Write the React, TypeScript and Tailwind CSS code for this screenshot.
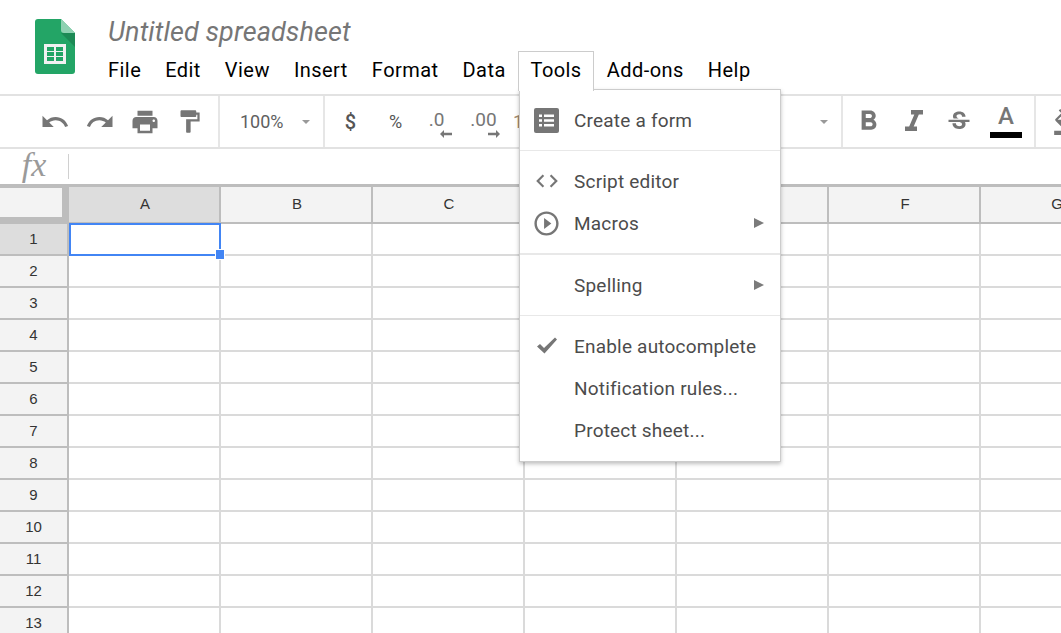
import React from 'react';
import {
  MdUndo, MdRedo, MdPrint, MdFormatPaint, MdFormatBold, MdFormatItalic, MdStrikethroughS,
  MdCode, MdPlayCircleOutline, MdFormatColorFill,
} from 'react-icons/md';

const menuBar = ['File', 'Edit', 'View', 'Insert', 'Format', 'Data'];
const columns = ['A', 'B', 'C', 'D', 'E', 'F', 'G'];
const rows = [1, 2, 3, 4, 5, 6, 7, 8, 9, 10, 11, 12, 13];

const Logo = () => (
  <svg width="40" height="55" viewBox="0 0 40 55">
    <path d="M3 0H26L40 14V52a3 3 0 0 1-3 3H3a3 3 0 0 1-3-3V3a3 3 0 0 1 3-3z" fill="#23a566" />
    <path d="M26 14L40 28V14z" fill="#1c8a55" />
    <path d="M26 0L40 14H29a3 3 0 0 1-3-3z" fill="#8ed1b1" />
    <path d="M9 25H31V45H9z" fill="#f1f1f1" />
    <path d="M12 28H19V32H12zM21 28H28V32H21zM12 33H19V37H12zM21 33H28V37H21zM12 38H19V42H12zM21 38H28V42H21z" fill="#23a566" />
  </svg>
);

const Separator = () => <div className="w-[2px] h-full shrink-0 bg-[#e6e6e6]" />;

const ToolButton = ({ children }: { children: React.ReactNode }) => (
  <div className="w-[45px] h-full flex items-center justify-center text-[#767676] shrink-0">{children}</div>
);

const DecimalIcon = ({ label, flip }: { label: string; flip?: boolean }) => (
  <div className="relative text-[19px] leading-none text-[#767676] -mt-[5px]">
    {label}
    <svg
      width="12"
      height="8"
      viewBox="0 0 12 8"
      className={`absolute -bottom-[9px] ${flip ? 'right-[-8px] -scale-x-100' : 'right-[-3px]'}`}
    >
      <path d="M0 2.8H8V0L12 4L8 8V5.2H0z" fill="#767676" />
    </svg>
  </div>
);

const Caret = () => (
  <div className="w-0 h-0 border-x-[4px] border-x-transparent border-t-[4px] border-t-[#999999]" />
);

const Toolbar = () => (
  <div className="h-[55px] border-y-2 border-[#e2e2e2] flex items-stretch pl-[32px] overflow-hidden">
    <ToolButton><MdUndo size={30} /></ToolButton>
    <ToolButton><MdRedo size={30} /></ToolButton>
    <ToolButton><MdPrint size={30} /></ToolButton>
    <ToolButton><MdFormatPaint size={27} /></ToolButton>
    <div className="ml-[6px] shrink-0"><Separator /></div>
    <div className="w-[103px] flex items-center pl-[20px] text-[18px] text-[#5f5f5f] shrink-0">
      <span className="w-[62px]">100%</span>
      <Caret />
    </div>
    <Separator />
    <div className="w-[3px] shrink-0" />
    <ToolButton><span className="text-[20px] font-medium text-[#555555]">$</span></ToolButton>
    <ToolButton><span className="text-[18px] text-[#555555]">%</span></ToolButton>
    <div className="w-[37px] flex items-center justify-center shrink-0"><DecimalIcon label=".0" flip /></div>
    <div className="w-[57px] flex items-center justify-center shrink-0"><DecimalIcon label=".00" /></div>
    <div className="w-[329px] flex items-center justify-between pr-[13px] shrink-0">
      <span className="text-[18px] text-[#a08a70] ml-[1px]">123</span>
      <Caret />
    </div>
    <Separator />
    <div className="w-[3px] shrink-0" />
    <ToolButton><MdFormatBold size={33} /></ToolButton>
    <ToolButton><MdFormatItalic size={36} /></ToolButton>
    <ToolButton><MdStrikethroughS size={28} /></ToolButton>
    <div className="w-[50px] flex flex-col items-center shrink-0 pt-[8px]">
      <span className="text-[24px] leading-[24px] font-medium text-[#767676]">A</span>
      <div className="w-[32px] h-[6px] bg-black mt-[4px]" />
    </div>
    <div className="ml-[3px] mr-[16px] shrink-0"><Separator /></div>
    <div className="flex items-center text-[#767676] shrink-0"><MdFormatColorFill size={26} /></div>
  </div>
);

const FormulaBar = () => (
  <div className="h-[35px] flex items-center">
    <div className="w-[68px] h-full flex items-center justify-center pb-[3px] text-[34px] leading-none italic text-[#9a9a9a] font-['Liberation_Serif',serif]">
      fx
    </div>
    <div className="w-px h-[25px] bg-[#d0d0d0]" />
  </div>
);

const Grid = () => (
  <div className="border-t-[3px] border-[#bdbdbd]">
    <div className="flex h-[37px]">
      <div className="w-[69px] shrink-0 h-full bg-[#bdbdbd]">
        <div className="w-[62px] h-[29px] mt-px bg-[#f3f3f3]" />
      </div>
      {columns.map((col, i) => (
        <div
          key={col}
          className={`w-[152px] shrink-0 h-full flex items-center justify-center pl-[2px] border-r-2 border-b-2 border-[#bdbdbd] text-[15px] text-[#333333] font-['Liberation_Sans',sans-serif] ${i === 0 ? 'bg-[#dddddd]' : 'bg-[#f3f3f3]'}`}
        >
          {col}
        </div>
      ))}
    </div>
    {rows.map((row) => (
      <div key={row} className="flex h-[32px]">
        <div
          className={`w-[69px] shrink-0 h-full flex items-center justify-center border-r-2 border-b-2 border-[#bdbdbd] text-[15px] text-[#333333] font-['Liberation_Sans',sans-serif] ${row === 1 ? 'bg-[#dddddd]' : 'bg-[#f3f3f3]'}`}
        >
          {row}
        </div>
        {columns.map((col) => (
          <div key={col} className="w-[152px] shrink-0 h-full border-r-2 border-b-2 border-[#dadada]" />
        ))}
      </div>
    ))}
  </div>
);

const MenuItem = ({ icon, label, arrow }: { icon?: React.ReactNode; label: string; arrow?: boolean }) => (
  <div className="h-[42px] flex items-center text-[19px] tracking-[0.2px] text-[#4c4c4c]">
    <div className="w-[54px] shrink-0 pl-[14px] flex items-center text-[#767676]">{icon}</div>
    <span className="flex-1 pt-[2px]">{label}</span>
    {arrow && (
      <div className="mr-[16px] w-0 h-0 border-y-[5px] border-y-transparent border-l-[10px] border-l-[#7b7b7b]" />
    )}
  </div>
);

const FormIcon = () => (
  <svg width="25" height="25" viewBox="0 0 25 25">
    <rect width="25" height="25" rx="2" fill="#767676" />
    <path d="M5 6.5H8V9H5zM10 6.5H20V9H10zM5 11.2H8V13.7H5zM10 11.2H20V13.7H10zM5 16H8V18.5H5zM10 16H20V18.5H10z" fill="#ffffff" />
  </svg>
);

const CheckIcon = () => (
  <svg width="26" height="26" viewBox="0 0 26 26" className="-mt-[3px]">
    <path d="M3 14.5L6 12L10 16L21 5.5L23 7.5L10.5 21.5z" fill="#767676" />
  </svg>
);

const ToolsMenu = () => (
  <>
    <div className="absolute left-[518px] top-[51px] w-[76px] h-[40px] z-30 bg-white border border-b-0 border-[#cccccc] flex items-start justify-center pt-[3px] text-[20px] tracking-[0.4px] leading-[30px] text-black">
      Tools
    </div>
    <div className="absolute left-[519px] top-[89px] w-[262px] h-[373px] z-20 bg-white border border-[#cccccc] shadow-[0_2px_4px_rgba(0,0,0,0.25)]">
      <div className="py-[9px] border-b border-[#e8e8e8]">
        <MenuItem icon={<FormIcon />} label="Create a form" />
      </div>
      <div className="py-[9px] border-b-2 border-[#e8e8e8]">
        <MenuItem icon={<MdCode size={26} />} label="Script editor" />
        <MenuItem icon={<MdPlayCircleOutline size={29} className="-ml-[2px]" />} label="Macros" arrow />
      </div>
      <div className="py-[9px] border-b border-[#e8e8e8]">
        <MenuItem label="Spelling" arrow />
      </div>
      <div className="py-[9px]">
        <MenuItem icon={<CheckIcon />} label="Enable autocomplete" />
        <MenuItem label="Notification rules..." />
        <MenuItem label="Protect sheet..." />
      </div>
    </div>
  </>
);

export default function App() {
  return (
    <div className="relative w-[1061px] h-[633px] overflow-hidden bg-white font-['Roboto',sans-serif]">
      <header className="h-[94px] flex">
        <div className="w-[108px] shrink-0 pl-[35px] pt-[19px]">
          <Logo />
        </div>
        <div>
          <div className="pt-[16px] text-[27px] tracking-[0.1px] leading-[32px] italic text-[#767676]">Untitled spreadsheet</div>
          <nav className="flex gap-[24px] mt-[7px] text-[20px] tracking-[0.45px] leading-[30px] text-black">
            {menuBar.map((item) => (
              <span key={item}>{item}</span>
            ))}
            <span className="w-[53px]" />
            <span>Add-ons</span>
            <span>Help</span>
          </nav>
        </div>
      </header>
      <Toolbar />
      <FormulaBar />
      <Grid />
      {/* selected cell */}
      <div className="absolute left-[69px] top-[223px] w-[152px] h-[33px] border-2 border-[#4285f4] z-10" />
      <div className="absolute left-[215px] top-[249px] w-[8px] h-[9px] bg-[#4285f4] border border-white box-content z-10" />
      <ToolsMenu />
    </div>
  );
}
